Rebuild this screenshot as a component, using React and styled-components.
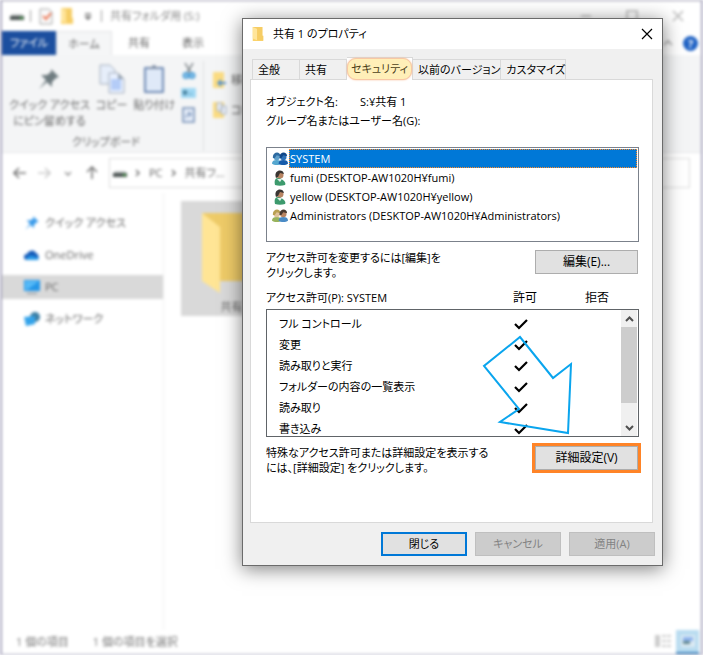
import React, { useState } from 'react';
import styled, { createGlobalStyle, css } from 'styled-components';

const users = [
    { name: 'SYSTEM', icon: 'system' },
    { name: 'fumi (DESKTOP-AW1020H¥fumi)', icon: 'user' },
    { name: 'yellow (DESKTOP-AW1020H¥yellow)', icon: 'user' },
    { name: 'Administrators (DESKTOP-AW1020H¥Administrators)', icon: 'group' },
];

const permissions = [
    'フル コントロール',
    '変更',
    '読み取りと実行',
    'フォルダーの内容の一覧表示',
    '読み取り',
    '書き込み',
];

const tabs = ['全般', '共有', 'セキュリティ', '以前のバージョン', 'カスタマイズ'];

/* ---------- icons ---------- */

const DriveIcon = () => (
    <svg width="14" height="14" viewBox="0 0 14 14">
        <path d="M2 5h10l2 3H0z" fill="#c9cccc" />
        <rect x="0" y="7" width="14" height="4" fill="#4b5352" />
        <rect x="10" y="8" width="3" height="2" fill="#4ea84f" />
    </svg>
);

const CheckPageIcon = () => (
    <svg width="14" height="17" viewBox="0 0 14 17">
        <path d="M1 1h9l3 3v12H1z" fill="#fafafa" stroke="#a5a5a5" />
        <path d="M4 8l3 3 5-6" fill="none" stroke="#ec7a58" strokeWidth="2" />
    </svg>
);

const SmallFolderIcon = ({ size = 16 }) => (
    <svg width={size} height={size} viewBox="0 0 16 16">
        <path d="M2 0h11v10h1v6H2z" fill="#fbd36b" />
        <path d="M2 0l5 2v13l-5-2z" fill="#ffe59b" />
        <path d="M7 2v13h7v-5h-1V0H2z" fill="#f3cb63" opacity=".7" />
    </svg>
);

const PinIcon = ({ size = 24, color = '#6f7c80' }) => (
    <svg width={size} height={size} viewBox="0 0 24 24">
        <path d="M14 2l8 8-3 1-4 4 0 5-5-5-8 7 7-9-5-5 6 0 4-3z" fill={color} />
    </svg>
);

const CopyIcon = () => (
    <svg width="26" height="30" viewBox="0 0 26 30">
        <path d="M1 1h10l5 5v14H1z" fill="#e6eefa" stroke="#a5aebb" />
        <path d="M10 9h9l6 6v14H10z" fill="#e9f1ff" stroke="#a5aebb" />
        <path d="M12 15h10v11H12z" fill="#b4ccf7" />
        <path d="M19 9v6h6z" fill="#98a3b1" />
    </svg>
);

const PasteIcon = () => (
    <svg width="22" height="30" viewBox="0 0 22 30">
        <rect x="1" y="3" width="20" height="26" rx="1" fill="#6f8ab3" />
        <rect x="3" y="5" width="16" height="22" fill="#dfe9f8" />
        <path d="M6 3h3a2 2 0 0 1 4 0h3v2H6z" fill="#7c8ca4" />
    </svg>
);

const CutIcon = () => (
    <svg width="14" height="16" viewBox="0 0 14 16">
        <path d="M3 0l6 10M11 0L5 10" stroke="#6c7479" strokeWidth="1.4" />
        <circle cx="4" cy="12.500" r="2.500" fill="#9fd3f5" stroke="#4f9fd6" strokeWidth="2" />
        <circle cx="10" cy="12.500" r="2.500" fill="#9fd3f5" stroke="#4f9fd6" strokeWidth="2" />
    </svg>
);

const PathIcon = () => (
    <svg width="15" height="10" viewBox="0 0 15 10">
        <rect width="15" height="10" fill="#9fd8f4" />
        <path d="M2 3l1 3 1-3 1 3 1-3M8 6h1M10 6h1" fill="none" stroke="#37708e" strokeWidth="1.2" />
    </svg>
);

const ShortcutIcon = () => (
    <svg width="13" height="16" viewBox="0 0 13 16">
        <rect x="1" y="1" width="11" height="14" fill="#e8effa" stroke="#6f8ab3" strokeWidth="1.500" />
        <path d="M4 11c0-3 1-4 4-4M6 5l3 2-2 3" fill="none" stroke="#6f8ab3" strokeWidth="1.2" />
    </svg>
);

const MoveToIcon = () => (
    <svg width="15" height="16" viewBox="0 0 15 16">
        <path d="M1 0h11v16H1z" fill="#fbdc83" />
        <path d="M14 10H9V7l-4 4 4 4v-3h5z" fill="#4f8fd0" />
    </svg>
);

const CopyToIcon = () => (
    <svg width="15" height="16" viewBox="0 0 15 16">
        <path d="M1 0h11v16H1z" fill="#fbdc83" />
        <path d="M5 1h5v8H5zM9 4h5v8H9z" fill="#eef3fb" stroke="#a5b0c0" />
    </svg>
);

const CloudIcon = () => (
    <svg width="16" height="16" viewBox="0 0 16 16">
        <path d="M3 13a3 3 0 0 1 0-6 5 5 0 0 1 9-1 4 4 0 0 1 1 7z" fill="#1259b8" />
        <path d="M2 13c0-3 4-5 7-4l6 2a2 2 0 0 1-2 2z" fill="#2a9be8" />
    </svg>
);

const PcIcon = () => (
    <svg width="16" height="16" viewBox="0 0 16 16">
        <rect x="0" y="1" width="16" height="11" fill="#2596e8" />
        <path d="M1 2h14L3 11H1z" fill="#55b9f7" />
        <path d="M3 14h10v1H3z" fill="#7d8b96" />
    </svg>
);

const NetworkIcon = () => (
    <svg width="16" height="16" viewBox="0 0 16 16">
        <circle cx="11" cy="6" r="5" fill="#3c7fa5" />
        <path d="M0 6l11-1v8L2 15z" fill="#34a3ea" />
    </svg>
);

const BigFolderIcon = () => (
    <svg width="72" height="84" viewBox="0 0 72 84">
        <path d="M2 2h68v68H20z" fill="#eecb68" />
        <path d="M2 2l18 14v66L2 70z" fill="#ffe595" />
    </svg>
);

const Person = ({ x = 0, hair, skin, body }) => (
    <g transform={`translate(${x} 0)`}>
        <path d="M0 12c0-3 2-4 5-4s5 1 5 4c-2 2-8 2-10 0z" fill={body} />
        <circle cx="5" cy="5" r="3.400" fill={skin} />
        <path d="M1 6C0-1 9-2 9 4L5 3 3 6z" fill={hair} />
    </g>
);

const UserIcon = ({ type }) => {
    if (type === 'user') {
        return (
            <svg width="16" height="16" viewBox="0 0 16 16">
                <path d="M3 15c-1-4 0-7 3-7h2l4 3c1 1 2 3 1 4-3 1-7 1-10 0z" fill="#3d9a6d" />
                <path d="M5 9l3 3 2-3z" fill="#e6efe9" />
                <circle cx="8" cy="5" r="3.500" fill="#b98563" />
                <path d="M4 8C1 0 11-2 12 4L8 3 6 7z" fill="#3a3532" />
            </svg>
        );
    }
    const system = type === 'system';
    return (
        <svg width="16" height="16" viewBox="0 -1 17 16">
            <Person hair={system ? '#2e6aa0' : '#b9a052'} skin={system ? '#5f9fca' : '#e0c39a'} body={system ? '#55a7cf' : '#98b35c'} />
            <Person x={7} hair={system ? '#10478a' : '#4a3a30'} skin={system ? '#2f72b8' : '#b98563'} body={system ? '#175cab' : '#4a8bc6'} />
        </svg>
    );
};

const CheckMark = () => (
    <svg width="14" height="12" viewBox="0 0 14 12" role="img" aria-label="許可">
        <path d="M1 6l4 4 8-8" fill="none" stroke="#000" strokeWidth="2.200" />
    </svg>
);

const Chevron = ({ up }) => (
    <svg width="9" height="6" viewBox="0 0 9 6">
        <path d={up ? 'M1 5l3.500-3.500L8 5' : 'M1 1l3.500 3.500L8 1'} fill="none" stroke="#505050" strokeWidth="2" />
    </svg>
);

const NavArrow = ({ d, color = '#777' }) => (
    <svg width="14" height="14" viewBox="0 0 14 14">
        <path d={d} fill="none" stroke={color} strokeWidth="1.600" />
    </svg>
);

/* ---------- page ---------- */

function Explorer() {
    return (
        <ExplorerWindow>
            <ExplorerTitle>
                <DriveIcon />
                <Divider />
                <CheckPageIcon />
                <SmallFolderIcon />
                <NavArrow d="M4 5h6M5 8h4L7 10z" />
                <Divider />
                <TitleText>共有フォルダ用 (S:)</TitleText>
                <WindowControls>
                    <PlainButton aria-label="最小化"><NavArrow d="M2 7h10" color="#bbb" /></PlainButton>
                    <PlainButton aria-label="最大化"><NavArrow d="M2 2h10v10H2z" color="#bbb" /></PlainButton>
                    <PlainButton aria-label="閉じる"><NavArrow d="M2 2l10 10M12 2L2 12" color="#bbb" /></PlainButton>
                </WindowControls>
            </ExplorerTitle>
            <RibbonTabs>
                <FileTab>ファイル</FileTab>
                <RibbonTab $active>ホーム</RibbonTab>
                <RibbonTab>共有</RibbonTab>
                <RibbonTab>表示</RibbonTab>
                <RibbonHelp>
                    <NavArrow d="M3 9l4-4 4 4" color="#aaa" />
                    <HelpButton>?</HelpButton>
                </RibbonHelp>
            </RibbonTabs>
            <Ribbon>
                <RibbonGroup>
                    <RibbonItems>
                        <RibbonButton><PinIcon />クイック アクセス<br />にピン留めする</RibbonButton>
                        <RibbonButton><CopyIcon />コピー</RibbonButton>
                        <RibbonButton><PasteIcon />貼り付け</RibbonButton>
                        <SmallIcons>
                            <CutIcon />
                            <PathIcon />
                            <ShortcutIcon />
                        </SmallIcons>
                    </RibbonItems>
                    <GroupName>クリップボード</GroupName>
                </RibbonGroup>
                <MoveButtons>
                    <SmallButton><MoveToIcon />移動先</SmallButton>
                    <SmallButton><CopyToIcon />コピー先</SmallButton>
                </MoveButtons>
            </Ribbon>
            <NavBar>
                <NavArrow d="M13 7H2M6 2L1 7l5 5" />
                <NavArrow d="M1 7h11M8 2l5 5-5 5" color="#ccc" />
                <NavArrow d="M4 6l3 3 3-3" color="#999" />
                <NavArrow d="M7 13V2M2 6l5-5 5 5" />
                <Address>
                    <DriveIcon />
                    <NavArrow d="M5 4l3 3-3 3" />
                    <span>PC</span>
                    <NavArrow d="M5 4l3 3-3 3" />
                    <span>共有フ...</span>
                </Address>
            </NavBar>
            <Content>
                <Sidebar>
                    <SideLink href="#quick"><PinIcon size={16} color="#3a9bea" />クイック アクセス</SideLink>
                    <SideLink href="#onedrive"><CloudIcon />OneDrive</SideLink>
                    <SideLink href="#pc" $active><PcIcon />PC</SideLink>
                    <SideLink href="#network"><NetworkIcon />ネットワーク</SideLink>
                </Sidebar>
                <Files>
                    <FileTile>
                        <BigFolderIcon />
                        共有 1
                    </FileTile>
                </Files>
            </Content>
            <StatusBar>
                <span>1 個の項目</span>
                <span>1 個の項目を選択</span>
                <ViewButtons>
                    <ViewButton aria-label="詳細">
                        <svg width="18" height="14" viewBox="0 0 18 14">
                            <path d="M1 1h5v12H1z" fill="#ccc" />
                            <path d="M8 2h9M8 7h9M8 12h9" stroke="#ccc" strokeWidth="2" strokeDasharray="4 1" />
                        </svg>
                    </ViewButton>
                    <ViewButton $active aria-label="大アイコン">
                        <svg width="14" height="12" viewBox="0 0 14 12">
                            <rect width="14" height="12" fill="#dceaf3" />
                            <path d="M2 2h10v4H2z" fill="#8fb4ee" />
                            <path d="M2 6h7v3H2z" fill="#5f868e" />
                        </svg>
                    </ViewButton>
                </ViewButtons>
            </StatusBar>
        </ExplorerWindow>
    );
}

function PropertiesDialog() {
    const [tab, setTab] = useState('セキュリティ');
    const [selected, setSelected] = useState('SYSTEM');

    return (
        <Dialog role="dialog" aria-labelledby="dialog-title">
            <DialogTitle>
                <SmallFolderIcon size={14} />
                <TitleName id="dialog-title">共有 1 のプロパティ</TitleName>
                <CloseButton aria-label="閉じる">
                    <svg width="12" height="12" viewBox="0 0 12 12">
                        <path d="M1 1l10 10M11 1L1 11" stroke="#000" strokeWidth="1.200" />
                    </svg>
                </CloseButton>
            </DialogTitle>
            <DialogBody>
                <TabList role="tablist">
                    {tabs.map((name) => (
                        <Tab
                            key={name}
                            role="tab"
                            aria-selected={name === tab}
                            $active={name === tab}
                            $width={tabWidths[name]}
                            onClick={() => setTab(name)}
                        >
                            {name === tab ? <Marker>{name}</Marker> : name}
                        </Tab>
                    ))}
                </TabList>
                <Panel role="tabpanel">
                    <ObjectRow>
                        <ObjectLabel>オブジェクト名:</ObjectLabel>
                        <span>S:¥共有 1</span>
                    </ObjectRow>
                    <ListLabel id="users-label">グループ名またはユーザー名(G):</ListLabel>
                    <UserList role="listbox" aria-labelledby="users-label">
                        {users.map((user) => (
                            <UserRow
                                key={user.name}
                                role="option"
                                aria-selected={user.name === selected}
                                onClick={() => setSelected(user.name)}
                            >
                                <UserIcon type={user.icon} />
                                <UserName $selected={user.name === selected}>{user.name}</UserName>
                            </UserRow>
                        ))}
                    </UserList>
                    <ActionRow>
                        <Note>アクセス許可を変更するには[編集]を<br />クリックします。</Note>
                        <WideButton>編集(E)...</WideButton>
                    </ActionRow>
                    <PermissionHead>
                        <span>アクセス許可(P): SYSTEM</span>
                        <HeadCell>許可</HeadCell>
                        <HeadCell>拒否</HeadCell>
                    </PermissionHead>
                    <PermissionBox>
                        <PermissionTable aria-label="アクセス許可">
                            <tbody>
                                {permissions.map((name) => (
                                    <tr key={name}>
                                        <NameCell>{name}</NameCell>
                                        <CheckCell><CheckMark /></CheckCell>
                                        <CheckCell />
                                    </tr>
                                ))}
                            </tbody>
                        </PermissionTable>
                        <ScrollBar>
                            <ScrollButton aria-label="上へ"><Chevron up /></ScrollButton>
                            <ScrollThumb />
                            <ScrollButton aria-label="下へ"><Chevron /></ScrollButton>
                        </ScrollBar>
                        <GuideArrow width="92" height="102" viewBox="0 0 92 102">
                            <path d="M38 3L71 44 89 30 86 99 18 88 37 75 2 32z" fill="none" stroke="#0aa5ee" strokeWidth="2" />
                        </GuideArrow>
                    </PermissionBox>
                    <ActionRow>
                        <Note>特殊なアクセス許可または詳細設定を表示する<br />には、[詳細設定] をクリックします。</Note>
                        <WideButton $marked>詳細設定(V)</WideButton>
                    </ActionRow>
                </Panel>
                <Footer>
                    <DialogButton $primary>閉じる</DialogButton>
                    <DialogButton disabled>キャンセル</DialogButton>
                    <DialogButton disabled>適用(A)</DialogButton>
                </Footer>
            </DialogBody>
        </Dialog>
    );
}

export default function App() {
    return (
        <Desktop>
            <GlobalStyle />
            <Explorer />
            <PropertiesDialog />
        </Desktop>
    );
}

/* ---------- styles ---------- */

const tabWidths = {
    '全般': 48,
    '共有': 47,
    'セキュリティ': 66,
    '以前のバージョン': 88,
    'カスタマイズ': 64,
};

const GlobalStyle = createGlobalStyle`
    * { box-sizing: border-box; }
    body {
        margin: 0;
        color: #000;
        font-family: 'Open Sans', 'Noto Sans CJK JP', sans-serif;
        font-size: 11px;
        line-height: 16px;
        font-feature-settings: 'palt';
    }
    button {
        font: inherit;
        font-feature-settings: inherit;
        color: inherit;
        padding: 0;
        border: 0;
        background: none;
        white-space: nowrap;
    }
    svg { flex: none; display: block; }
`;

const Desktop = styled.div`
    position: relative;
    min-height: 100vh;
    overflow: hidden;
    background: #fff;
`;

const ExplorerWindow = styled.div`
    display: flex;
    flex-direction: column;
    min-height: 100vh;
    border: 2px solid #a9a7bf;
    border-top-color: #8c8aa3;
    border-top-width: 1px;
    border-bottom-width: 1px;
    background: #fff;
    color: #666;
    filter: blur(1.4px);
`;

const ExplorerTitle = styled.div`
    display: flex;
    align-items: center;
    gap: 6px;
    height: 30px;
    padding-left: 8px;
`;

const Divider = styled.span`
    width: 1px;
    height: 12px;
    margin-right: 2px;
    background: #999;
`;

const TitleText = styled.span`
    color: #888;
`;

const WindowControls = styled.div`
    display: flex;
    gap: 32px;
    margin-left: auto;
    padding-right: 16px;
`;

const PlainButton = styled.button`
    display: block;
`;

const RibbonTabs = styled.div`
    display: flex;
    height: 24px;
`;

const RibbonTab = styled.button`
    min-width: 54px;
    ${(props) => props.$active && css`
        min-width: 56px;
        border: 1px solid #e2e3e4;
        border-bottom: 0;
        background: #f5f6f7;
    `}
`;

const FileTab = styled(RibbonTab)`
    background: #1c4f9f;
    color: #fff;
`;

const RibbonHelp = styled.div`
    display: flex;
    align-items: center;
    gap: 8px;
    margin-left: auto;
    padding-right: 3px;
`;

const HelpButton = styled.button`
    width: 15px;
    height: 15px;
    border-radius: 50%;
    background: #1f62c4;
    color: #fff;
    font-weight: bold;
    line-height: 15px;
`;

const Ribbon = styled.div`
    display: flex;
    height: 98px;
    padding: 6px 0 1px 7px;
    background: #f4f5f6;
    border-bottom: 1px solid #e6e7e8;
`;

const RibbonGroup = styled.div`
    display: flex;
    flex-direction: column;
    width: 195px;
    border-right: 1px solid #dedfe0;
`;

const RibbonItems = styled.div`
    display: flex;
    gap: 6px;
    flex: 1;
`;

const RibbonButton = styled.button`
    display: grid;
    grid-template-rows: 36px auto;
    justify-items: center;
    align-items: center;
    align-content: start;
    line-height: 16px;
`;

const SmallIcons = styled.div`
    display: flex;
    flex-direction: column;
    align-items: center;
    gap: 9px;
    padding-top: 2px;
`;

const GroupName = styled.div`
    text-align: center;
    line-height: 18px;
`;

const MoveButtons = styled.div`
    display: flex;
    flex-direction: column;
    gap: 14px;
    padding: 11px 8px;
`;

const SmallButton = styled.button`
    display: flex;
    align-items: center;
    gap: 4px;
`;

const NavBar = styled.div`
    display: flex;
    align-items: center;
    gap: 10px;
    padding: 5px 11px;
`;

const Address = styled.div`
    display: flex;
    flex: 1;
    align-items: center;
    gap: 4px;
    height: 30px;
    padding-left: 3px;
    border: 1px solid #dcdcdc;
`;

const Content = styled.div`
    display: flex;
    flex: 1;
`;

const Sidebar = styled.nav`
    display: flex;
    flex-direction: column;
    gap: 8px;
    width: 162px;
    padding-top: 18px;
    border-right: 1px solid #f0f0f0;
`;

const SideLink = styled.a`
    display: flex;
    align-items: center;
    gap: 5px;
    height: 24px;
    padding-left: 22px;
    color: inherit;
    text-decoration: none;
    background: ${(props) => (props.$active ? '#d9d9d9' : 'transparent')};
`;

const Files = styled.div`
    padding: 8px 17px;
`;

const FileTile = styled.button`
    display: flex;
    flex-direction: column;
    align-items: center;
    gap: 4px;
    width: 110px;
    padding: 10px 0 1px;
    background: #d9d9d9;
`;

const StatusBar = styled.div`
    display: flex;
    align-items: center;
    gap: 24px;
    height: 24px;
    padding-left: 14px;
    color: #777;
`;

const ViewButtons = styled.div`
    display: flex;
    gap: 2px;
    height: 100%;
    margin-left: auto;
    padding-right: 2px;
`;

const ViewButton = styled.button`
    display: grid;
    place-items: center;
    width: 23px;
    background: ${(props) => (props.$active ? '#b9dcf0' : 'transparent')};
    border-bottom: 2px solid ${(props) => (props.$active ? '#4a8fc4' : 'transparent')};
`;

/* the dialog floats over the explorer window */
const Dialog = styled.section`
    position: absolute;
    top: 18px;
    left: 242px;
    right: 40px;
    border: 1px solid #6b6b6b;
    background: #f0f0f0;
    box-shadow: 0 3px 18px rgba(0, 0, 0, 0.5);
`;

const DialogTitle = styled.header`
    display: flex;
    align-items: center;
    gap: 8px;
    height: 30px;
    padding: 0 9px 0 8px;
    background: #fff;
`;

const TitleName = styled.h1`
    margin: 0;
    font-size: 11px;
    font-weight: normal;
`;

const CloseButton = styled.button`
    margin-left: auto;
`;

const DialogBody = styled.div`
    padding: 8px 7px 9px;
`;

const TabList = styled.div`
    display: flex;
    align-items: flex-end;
    padding-left: 2px;
`;

const Tab = styled.button`
    flex: 0 0 ${(props) => props.$width}px;
    height: 20px;
    padding-left: 5px;
    text-align: left;
    border: 1px solid #d9d9d9;
    border-bottom: 0;
    border-left-width: 0;
    &:first-child {
        border-left-width: 1px;
    }
    ${(props) => props.$active && css`
        height: 23px;
        margin-bottom: -1px;
        padding: 0;
        text-align: center;
        background: #fff;
        z-index: 1;
    `}
`;

const Marker = styled.span`
    display: block;
    height: 22px;
    line-height: 20px;
    border: 1px solid #f8c8a4;
    border-radius: 9px;
    background: #ffefb8;
    box-shadow: 0 0 2px #f8b890;
    color: #4d4119;
`;

const Panel = styled.div`
    margin-right: 2px;
    padding: 13px 13px 47px 15px;
    border: 1px solid #d9d9d9;
    background: #fff;
`;

const ObjectRow = styled.div`
    display: flex;
    line-height: 18px;
`;

const ObjectLabel = styled.span`
    width: 94px;
`;

const ListLabel = styled.div`
    line-height: 20px;
`;

const UserList = styled.ul`
    height: 95px;
    margin: 16px 0 8px;
    padding: 1px;
    border: 1px solid #7b818b;
    list-style: none;
`;

const UserRow = styled.li`
    display: flex;
    align-items: center;
    gap: 1px;
    height: 19px;
    padding-left: 4px;
`;

const UserName = styled.span`
    flex: 1;
    line-height: 17px;
    border: 1px solid transparent;
    ${(props) => props.$selected && css`
        border: 1px dotted #ff8a28;
        background: #0078d7;
        color: #fff;
    `}
`;

const ActionRow = styled.div`
    display: flex;
    justify-content: space-between;
    align-items: flex-start;
`;

const Note = styled.p`
    margin: 0;
    line-height: 15px;
    white-space: nowrap;
`;

const WideButton = styled.button`
    width: 103px;
    height: 24px;
    margin-right: 1px;
    border: 1px solid #adadad;
    background: #e1e1e1;
    font-size: 12px;
    ${(props) => props.$marked && css`
        margin-top: 1px;
        outline: 3px solid #ff8427;
    `}
`;

const PermissionHead = styled.div`
    display: grid;
    grid-template-columns: 1fr 72px 72px;
    margin: 10px 6px 3px 0;
`;

const HeadCell = styled.span`
    font-size: 12px;
    text-align: center;
`;

const PermissionBox = styled.div`
    position: relative;
    display: flex;
    height: 128px;
    margin-bottom: 8px;
    padding: 0 1px 0 12px;
    overflow: hidden;
    border: 1px solid #606468;
`;

const PermissionTable = styled.table`
    flex: 1;
    align-self: flex-start;
    margin-top: 3px;
    border-collapse: collapse;
`;

const NameCell = styled.td`
    height: 21px;
    padding: 0;
`;

const CheckCell = styled.td`
    width: 67px;
    padding: 0;
    svg { margin: 0 auto; }
`;

const ScrollBar = styled.div`
    display: flex;
    flex-direction: column;
    width: 16px;
    background: #f0f0f0;
`;

const ScrollButton = styled.button`
    display: grid;
    place-items: center;
    height: 17px;
    &:last-child {
        margin-top: auto;
    }
`;

const ScrollThumb = styled.div`
    height: 76px;
    background: #cdcdcd;
`;

const GuideArrow = styled.svg`
    position: absolute;
    top: 24px;
    right: 64px;
`;

const Footer = styled.div`
    display: flex;
    justify-content: flex-end;
    gap: 8px;
    padding-top: 9px;
`;

const DialogButton = styled.button`
    width: 86px;
    height: 24px;
    border: ${(props) => (props.$primary ? '2px solid #0078d7' : '1px solid #adadad')};
    background: #e1e1e1;
    &:disabled {
        border-color: #bfbfbf;
        background: #cccccc;
        color: #838383;
    }
`;
